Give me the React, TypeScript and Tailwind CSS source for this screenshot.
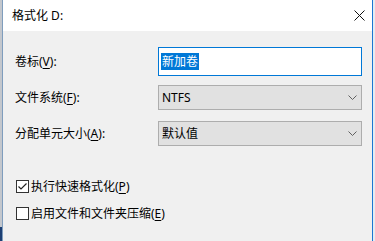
function Key({ k }: { k: string }) {
  return <span className="underline underline-offset-2">{k}</span>;
}

function Chevron() {
  return (
    <svg width="9" height="5" viewBox="0 0 9 5" className="shrink-0">
      <path d="M0.5 0.5 L4.5 4.5 L8.5 0.5" fill="none" stroke="#606060" strokeWidth="1" />
    </svg>
  );
}

function Select({ value }: { value: string }) {
  return (
    <div className="w-[204px] h-[25px] bg-[#e1e1e1] border border-[#adadad] flex items-center justify-between pl-[3px] pr-[4px]">
      <span>{value}</span>
      <Chevron />
    </div>
  );
}

function Check({ checked, children }: { checked?: boolean; children: React.ReactNode }) {
  return (
    <div className="flex items-center h-[13px] gap-[2px]">
      <div className="w-[13px] h-[13px] bg-white border border-[#333] flex items-center justify-center">
        {checked && (
          <svg width="11" height="11" viewBox="0 0 11 11">
            <path d="M1.5 5.5 L4 8 L9.5 2.5" fill="none" stroke="#222" strokeWidth="1.2" />
          </svg>
        )}
      </div>
      <span>{children}</span>
    </div>
  );
}

export default function App() {
  return (
    <div className="w-[375px] h-[241px] flex text-[12px] leading-[16px] text-black font-['Segoe_UI','Noto_Sans','Noto_Sans_CJK_SC',sans-serif]">
      <div className="w-[2px] flex flex-col">
        <div className="flex-1 bg-[#c3c7cd]" />
        <div className="h-[14px] bg-[#1d3f73]" />
      </div>
      <div className="flex-1 flex flex-col border-l border-l-[#7f9dbd] border-r border-r-[#1c76d2]">
        <div className="h-[31px] bg-white flex items-center justify-between pl-[9px] pr-[7px]">
          <span>格式化 D:</span>
          <svg width="11" height="11" viewBox="0 0 11 11">
            <path d="M0.5 0.5 L10.5 10.5 M10.5 0.5 L0.5 10.5" stroke="#111" strokeWidth="1" />
          </svg>
        </div>
        <div className="flex-1 bg-[#f0f0f0] pl-[12px] pt-[16px]">
          <div className="flex items-center h-[29px]">
            <span className="w-[143px]">
              卷标(<Key k="V" />):
            </span>
            <div className="w-[204px] h-[29px] bg-white border border-[#0078d7] flex items-center pl-[2px]">
              <span className="bg-[#0078d7] text-white leading-[17px] px-[1px]">新加卷</span>
            </div>
          </div>
          <div className="flex items-center mt-[9px]">
            <span className="w-[143px]">
              文件系统(<Key k="F" />):
            </span>
            <Select value="NTFS" />
          </div>
          <div className="flex items-center mt-[11px]">
            <span className="w-[143px]">
              分配单元大小(<Key k="A" />):
            </span>
            <Select value="默认值" />
          </div>
          <div className="mt-[34px] pl-[1px] flex flex-col gap-[14px]">
            <Check checked>
              执行快速格式化(<Key k="P" />)
            </Check>
            <Check>
              启用文件和文件夹压缩(<Key k="E" />)
            </Check>
          </div>
        </div>
      </div>
      <div className="w-[2px] bg-[#e6ebf1]" />
    </div>
  );
}
